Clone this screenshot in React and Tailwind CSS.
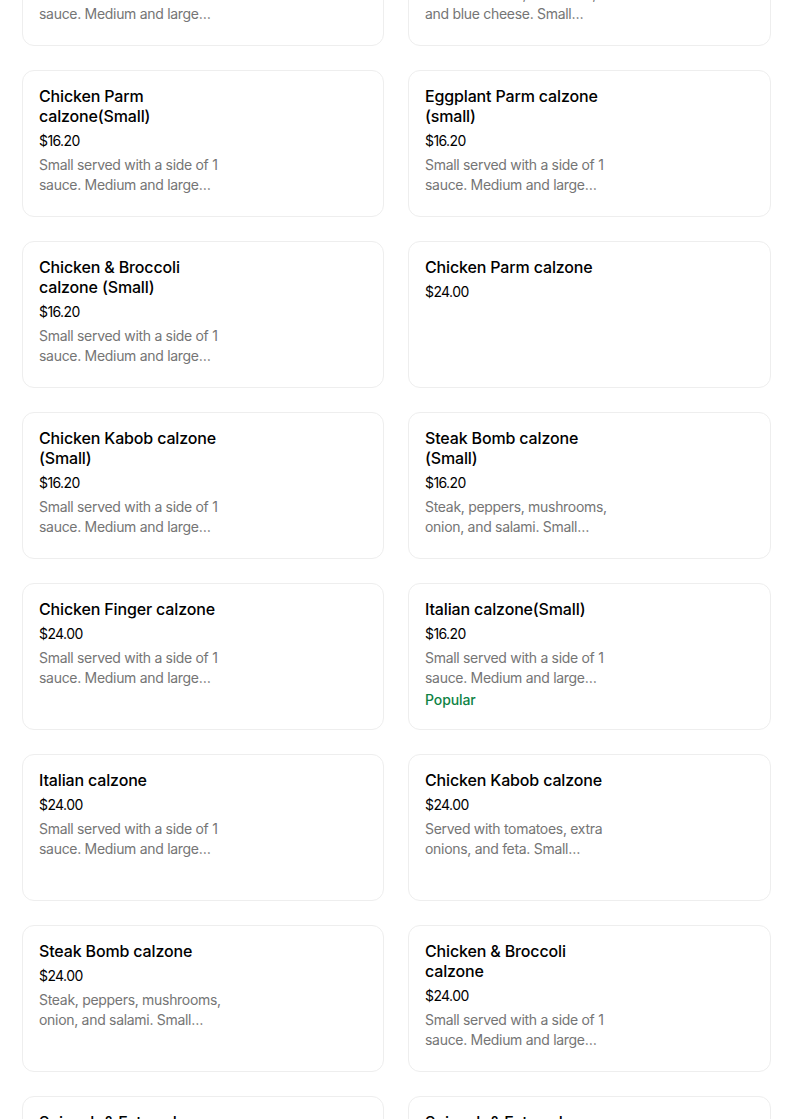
import React from 'react';

const SMALL_DESC = 'Small served with a side of 1 sauce. Medium and large served with a side of 2 sauces.';

const items = [
  { name: 'Buffalo Chicken calzone (Small)', price: '$16.20', desc: SMALL_DESC },
  { name: 'Buffalo Chicken calzone (Small)', price: '$16.20', desc: 'Buffalo chicken, hot sauce, and blue cheese. Small served with a side of 1 sauce.' },
  { name: 'Chicken Parm calzone(Small)', price: '$16.20', desc: SMALL_DESC },
  { name: 'Eggplant Parm calzone (small)', price: '$16.20', desc: SMALL_DESC },
  { name: 'Chicken & Broccoli calzone (Small)', price: '$16.20', desc: SMALL_DESC },
  { name: 'Chicken Parm calzone', price: '$24.00' },
  { name: 'Chicken Kabob calzone (Small)', price: '$16.20', desc: SMALL_DESC },
  { name: 'Steak Bomb calzone (Small)', price: '$16.20', desc: 'Steak, peppers, mushrooms, onion, and salami. Small served with a side of 1 sauce.' },
  { name: 'Chicken Finger calzone', price: '$24.00', desc: SMALL_DESC },
  { name: 'Italian calzone(Small)', price: '$16.20', desc: SMALL_DESC, popular: true },
  { name: 'Italian calzone', price: '$24.00', desc: SMALL_DESC },
  { name: 'Chicken Kabob calzone', price: '$24.00', desc: 'Served with tomatoes, extra onions, and feta. Small served with a side of 1 sauce.' },
  { name: 'Steak Bomb calzone', price: '$24.00', desc: 'Steak, peppers, mushrooms, onion, and salami. Small served with a side of 1 sauce.' },
  { name: 'Chicken & Broccoli calzone', price: '$24.00', desc: SMALL_DESC },
  { name: 'Spinach & Feta calzone (Small)', price: '$16.20', desc: SMALL_DESC },
  { name: 'Spinach & Feta calzone', price: '$24.00', desc: SMALL_DESC },
];

function ItemCard({ item }) {
  return (
    <div className="h-[147px] rounded-xl border border-[#eeeeee] bg-white px-4 pt-[15px] flex">
      <div className="w-[188px]">
        <div className="text-[16px] leading-5 font-medium text-black tracking-[-0.15px]">{item.name}</div>
        <div className="mt-[5px] text-[14px] leading-5 text-black tracking-[-0.6px]">{item.price}</div>
        {item.desc && (
          <div className="mt-[4px] text-[14px] leading-5 text-[#757575] tracking-[-0.3px] line-clamp-2">{item.desc}</div>
        )}
        {item.popular && (
          <div className="mt-[2px] text-[14px] leading-5 font-medium text-[#0e8345] tracking-[-0.1px]">Popular</div>
        )}
      </div>
    </div>
  );
}

export default function App() {
  return (
    <div className="bg-white h-[1119px] overflow-hidden" style={{ fontFamily: 'Inter, "Noto Sans", sans-serif' }}>
      <div className="-mt-[101px] pl-[22px] grid grid-cols-[362px_363px] gap-6">
        {items.map((item, i) => (
          <ItemCard key={i} item={item} />
        ))}
      </div>
    </div>
  );
}
